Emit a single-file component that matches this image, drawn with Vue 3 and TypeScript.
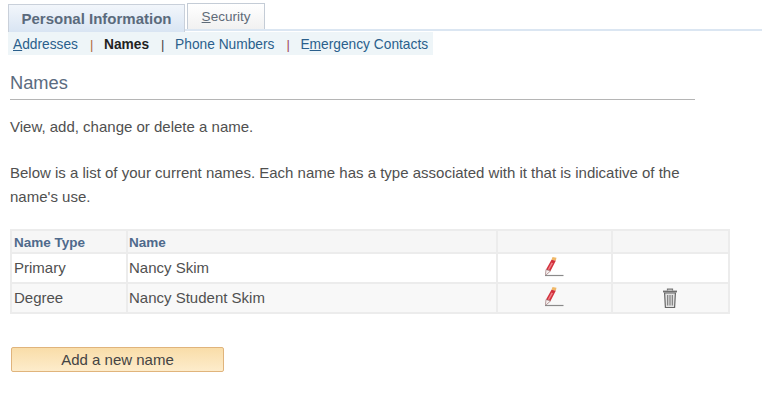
<script setup lang="ts">
interface Row { type: string; name: string; del: boolean; alt: boolean }
const rows: Row[] = [
  { type: 'Primary', name: 'Nancy Skim', del: false, alt: false },
  { type: 'Degree', name: 'Nancy Student Skim', del: true, alt: true },
]
</script>

<template>
  <div class="page">
    <div class="tabs">
      <div class="tab active">Personal Information</div>
      <div class="tab inactive"><u>S</u>ecurity</div>
    </div>
    <div class="subnav">
      <a class="link"><u>A</u>ddresses</a>
      <span class="sep sep1">|</span>
      <b class="cur">Names</b>
      <span class="sep sep2">|</span>
      <a class="link">Phone Numbers</a>
      <span class="sep sep3">|</span>
      <a class="link">E<u>m</u>ergency Contacts</a>
    </div>
    <h1 class="title">Names</h1>
    <p class="intro">View, add, change or delete a name.</p>
    <p class="desc">Below is a list of your current names. Each name has a type associated with it that is indicative of the name's use.</p>
    <table class="grid">
      <colgroup>
        <col class="c1" /><col class="c2" /><col class="c3" /><col class="c4" />
      </colgroup>
      <thead>
        <tr><th>Name Type</th><th class="second">Name</th><th></th><th></th></tr>
      </thead>
      <tbody>
        <tr v-for="r in rows" :key="r.type" :class="{ alt: r.alt }">
          <td>{{ r.type }}</td>
          <td class="second">{{ r.name }}</td>
          <td class="ic">
            <svg class="pencil" width="20" height="21" viewBox="0 0 20 21">
              <path d="M1 19.500H19.500" stroke="#8a8a8a" stroke-width="1.200" fill="none" />
              <path d="M8.500 1L12.500 1.800L11.800 4.800L7.500 3.800Z" fill="#f0b868" />
              <path d="M7.500 3.800L11.800 4.800L6.500 15L2 13.500Z" fill="#d2303c" />
              <path d="M7.500 6.500L9 7.200L5 14L3.800 13.500Z" fill="#f08088" />
              <path d="M2 13.500L6.500 15L2.500 18.500L1.500 18.500Z" fill="#f6f0f0" stroke="#8a5a5a" stroke-width=".6" />
            </svg>
          </td>
          <td class="ic">
            <svg v-if="r.del" class="trash" width="18" height="21" viewBox="0 0 18 21">
              <path d="M6.500 2.500V1.200H11.500V2.500" fill="none" stroke="#777" stroke-width="1.200" />
              <path d="M2 3.500H16" stroke="#6f6f6f" stroke-width="1.800" />
              <path d="M3.600 5H14.400L13.600 19.500H4.400Z" fill="#e2e2e2" stroke="#666" stroke-width="1.200" />
              <path d="M6.700 7V17.500M9 7V17.500M11.300 7V17.500" stroke="#777" stroke-width="1.100" />
            </svg>
          </td>
        </tr>
      </tbody>
    </table>
    <button class="add" type="button">Add a new name</button>
  </div>
</template>

<style>
html, body { margin: 0; background: #fff; }
</style>

<style scoped>
.page {
  width: 775px;
  height: 406px;
  box-sizing: border-box;
  padding-top: 3px;
  overflow: hidden;
  font-family: "Liberation Sans", Arial, sans-serif;
  color: #505050;
  font-size: 15px;
}
.tabs {
  display: flex;
  align-items: flex-start;
  gap: 2px;
  margin-left: 8px;
  width: 754px;
  height: 28px;
  box-sizing: border-box;
  border-bottom: 2px solid #dbe6f2;
}
.tab { box-sizing: border-box; text-align: center; }
.active {
  width: 177px;
  height: 28px;
  margin-top: 1px;
  padding-top: 5px;
  border: 1px solid #c9d0da;
  border-bottom: 0;
  background: linear-gradient(#f2f6fb, #d9e5f3);
  color: #5a6a7c;
  font-weight: bold;
  font-size: 15px;
}
.inactive {
  width: 78px;
  height: 26px;
  padding-top: 5px;
  border: 1px solid #c4ccd6;
  border-bottom: 0;
  background: linear-gradient(#fff, #f1f1f1);
  color: #5f6b78;
  font-size: 13.500px;
}
.subnav {
  display: flex;
  align-items: center;
  margin: 1px 0 0 8px;
  padding: 2px 0 0 5px;
  box-sizing: content-box;
  width: 420px;
  height: 21px;
  background: #eef5f8;
  font-size: 13.750px;
  white-space: nowrap;
}
.link { color: #2a5f8c; }
.cur { color: #222; }
.sep { width: 0; font-size: 13px; }
.sep1 { color: #b06a3a; margin: 0 14px 0 12px; }
.sep2 { color: #444; margin: 0 14px 0 12px; }
.sep3 { color: #a04a5a; margin: 0 14px 0 12px; }
.title {
  margin: 17px 0 0 10px;
  width: 685px;
  height: 28px;
  box-sizing: border-box;
  border-bottom: 1px solid #b5b5b5;
  font-size: 18.300px;
  font-weight: normal;
  line-height: 22px;
  color: #5b6b80;
}
.intro { margin: 18px 0 0 10px; line-height: 18px; }
.desc { margin: 25px 0 0 10px; width: 685px; line-height: 24px; }
.grid {
  display: table;
  margin: 20px 0 0 10px;
  width: 720px;
  table-layout: fixed;
  border-collapse: collapse;
  border: 2px solid #d5d8dc;
}
.c1 { width: 116px; }
.c2 { width: 370px; }
.c3 { width: 115px; }
.c4 { width: 117px; }
th, td {
  box-sizing: border-box;
  border: 2px solid #ececec;
  padding: 0 0 0 2px;
  text-align: left;
}
th {
  height: 23px;
  padding-top: 2px;
  background: #f6f6f6;
  color: #4f6a8c;
  font-size: 13.500px;
}
td { height: 30px; padding-bottom: 2px; background: #fff; }
th.second, td.second { padding-left: 1px; }
.alt td { background: #f8f8f8; }
td.ic { padding: 0; text-align: center; }
svg { display: inline-block; vertical-align: middle; }
.pencil { margin: 0 1px 3px 0; }
.trash { margin-right: 2px; }
.add {
  display: block;
  margin: 33px 0 0 11px;
  width: 213px;
  height: 25px;
  padding: 0;
  border: 1px solid #e0b47c;
  border-radius: 2px;
  background: linear-gradient(#f9dda9, #fdeccb);
  color: #444;
  font-family: inherit;
  font-size: 15px;
}
</style>
